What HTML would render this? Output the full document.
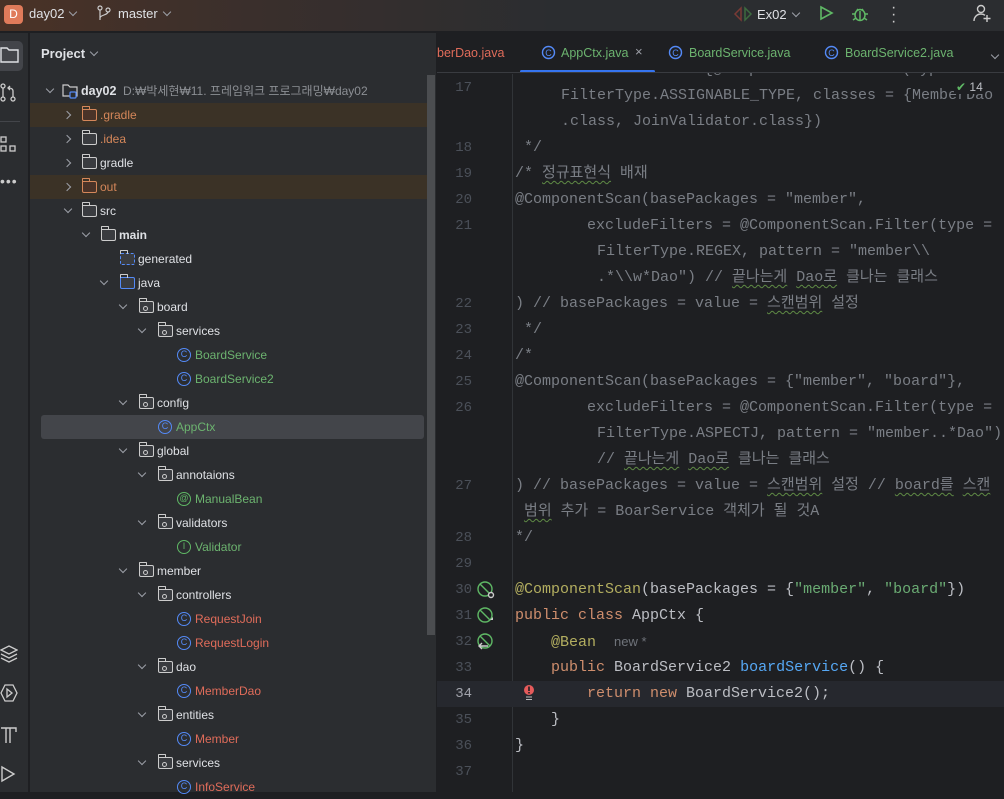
<!DOCTYPE html>
<html><head><meta charset="utf-8"><style>
*{margin:0;padding:0;box-sizing:border-box}
body{width:1004px;height:792px;overflow:hidden;background:#1e1f22;font-family:"Liberation Sans","Noto Sans CJK KR",sans-serif;position:relative;color:#dfe1e5}
.abs{position:absolute}
#title{left:0;top:0;width:1004px;height:32px;background:linear-gradient(90deg,#4a3226 0%,#3a2f2c 25%,#2b2d30 55%,#2b2d30 100%);border-bottom:1px solid #1e1f22}
#side{left:0;top:33px;width:29px;height:759px;background:#2b2d30;border-right:1px solid #1e1f22}
#tree{left:30px;top:33px;width:407px;height:759px;background:#2b2d30;border-right:1px solid #1e1f22}
.row{position:absolute;left:0;height:24px;font-size:12px;line-height:24px;white-space:nowrap}
.arr{position:absolute;top:7px;width:6px;height:6px;border-right:1.3px solid #9da0a8;border-bottom:1.3px solid #9da0a8}
.dn{transform:rotate(45deg)}
.rt{transform:rotate(-45deg);top:9px}
.ic{position:absolute;top:5px}
.code{position:absolute;left:515px;font-family:"Liberation Mono","Noto Sans CJK KR",monospace;font-size:15px;line-height:26px;height:26px;white-space:pre;color:#bcbec4}
.ln{position:absolute;left:440px;width:32px;text-align:right;font-family:"Liberation Mono",monospace;font-size:14px;line-height:26px;color:#4b5059}
.k{color:#cf8e6d}.a{color:#b3ae60}.s{color:#6aab73}.c{color:#7a7e85}.m{color:#56a8f5}
.w{text-decoration:underline wavy #5f8a45;text-underline-offset:3px;text-decoration-thickness:1px}
.tab{position:absolute;top:46px;font-size:12.5px;white-space:nowrap}
.chev{display:inline-block;width:6px;height:6px;border-right:1.3px solid #9da0a8;border-bottom:1.3px solid #9da0a8;transform:rotate(45deg);margin-left:6px;position:relative;top:-3px}
.f{position:absolute;top:6px;width:15px;height:12px;border:1.2px solid #ccc;border-radius:1px 2px 2px 2px;background:#3a3c40}
.f::before{content:"";position:absolute;left:-1.2px;top:-4px;width:6px;height:3px;border:1.2px solid #ccc;border-bottom:none;border-radius:1px 1px 0 0}
.fo{border-color:#d5875a;background:#4a3328}.fo::before{border-color:#d5875a}
.p::after{content:"";position:absolute;left:3px;top:4px;width:3px;height:3px;border:1px solid #ccc;border-radius:50%}
.cl{position:absolute;top:5px;width:14px;height:14px;border:1.4px solid #548af7;border-radius:50%;font-size:9px;line-height:11px;text-align:center;color:#548af7}
.cg{border-color:#5fb865;color:#5fb865}
</style></head><body>
<div id="title" class="abs">
 <div class="abs" style="left:4px;top:5px;width:19px;height:19px;background:#e07b5a;border-radius:4px;color:#fff;font-size:12px;text-align:center;line-height:19px">D</div>
 <div class="abs" style="left:29px;top:6px;font-size:13px;color:#dfe1e5">day02<span class="chev"></span></div>
 <svg class="abs" style="left:97px;top:5px" width="14" height="16" viewBox="0 0 14 16" fill="none" stroke="#ccc" stroke-width="1.2"><circle cx="3" cy="3" r="2"/><circle cx="11" cy="5" r="2"/><path d="M3 5v10M11 7c0 3-8 3-8 6"/></svg>
 <div class="abs" style="left:118px;top:6px;font-size:13px;color:#dfe1e5">master<span class="chev"></span></div>
 <svg class="abs" style="left:733px;top:6px" width="20" height="16" viewBox="0 0 20 16"><path d="M8 2L2 8l6 6z" fill="none" stroke="#7a3a35" stroke-width="1.5"/><path d="M12 2l6 6-6 6z" fill="none" stroke="#3d6b3f" stroke-width="1.5"/></svg>
 <div class="abs" style="left:757px;top:7px;font-size:13px;color:#dfe1e5">Ex02<span class="chev"></span></div>
 <svg class="abs" style="left:818px;top:5px" width="16" height="16" viewBox="0 0 16 16"><path d="M3 2l11 6-11 6z" fill="none" stroke="#5fb865" stroke-width="1.6"/></svg>
 <svg class="abs" style="left:851px;top:5px" width="18" height="17" viewBox="0 0 18 17" fill="none" stroke="#5fb865" stroke-width="1.5"><ellipse cx="9" cy="10" rx="5" ry="5.5"/><path d="M6 4l1.5 1.5M12 4l-1.5 1.5M1 9h3M14 9h3M2 15l3-2M16 15l-3-2M9 6v9"/></svg>
 <div class="abs" style="left:891px;top:4px;width:4px;color:#ccc;font-size:16px;line-height:7px">·<br>·<br>·</div>
 <svg class="abs" style="left:972px;top:3px" width="20" height="20" viewBox="0 0 20 20" fill="none" stroke="#ccc" stroke-width="1.4"><circle cx="9" cy="6" r="3.5"/><path d="M2 18c0-4 3-7 7-7 2 0 3 .5 4 1.3M15 12v7M11.5 15.5h7"/></svg>
</div>
<div id="side" class="abs">
 <div class="abs" style="left:0;top:8px;width:23px;height:30px;background:#43454a;border-radius:0 5px 5px 0"></div>
 <svg class="abs" style="left:0;top:13px" width="20" height="18" viewBox="0 0 20 18" fill="none" stroke="#dfe1e5" stroke-width="1.4"><path d="M1 2h6l2 2h9v12H1z"/></svg>
 <svg class="abs" style="left:0;top:50px" width="18" height="20" viewBox="0 0 18 20" fill="none" stroke="#ccc" stroke-width="1.3"><circle cx="3" cy="3" r="2"/><circle cx="3" cy="16" r="2"/><circle cx="13" cy="16" r="2"/><path d="M3 5v9M13 14V8c0-2-2-3-4-3M10 3l-2 2 2 2"/></svg>
 <div class="abs" style="left:0;top:88px;width:20px;border-top:1px solid #43454a"></div>
 <svg class="abs" style="left:0;top:103px" width="18" height="18" viewBox="0 0 18 18" fill="none" stroke="#ccc" stroke-width="1.3"><rect x="1" y="1" width="5" height="5"/><rect x="1" y="10" width="5" height="5"/><rect x="10" y="10" width="5" height="5"/></svg>
 <div class="abs" style="left:0;top:140px;color:#ccc;font-size:14px;letter-spacing:1px">•••</div>
 <svg class="abs" style="left:0;top:612px" width="18" height="18" viewBox="0 0 18 18" fill="none" stroke="#ccc" stroke-width="1.3"><path d="M9 1l8 4-8 4-8-4zM1 9l8 4 8-4M1 13l8 4 8-4"/></svg>
 <svg class="abs" style="left:0;top:651px" width="18" height="18" viewBox="0 0 18 18" fill="none" stroke="#ccc" stroke-width="1.3"><path d="M5 1h8l4 8-4 8H5L1 9z"/><path d="M7 5l5 4-5 4z"/></svg>
 <svg class="abs" style="left:0;top:692px" width="18" height="20" viewBox="0 0 18 20" fill="none" stroke="#ccc" stroke-width="1.4"><path d="M1 3h15v4M6 3v15M10 3v15"/></svg>
 <svg class="abs" style="left:0;top:732px" width="16" height="18" viewBox="0 0 16 18" fill="none" stroke="#ccc" stroke-width="1.4"><path d="M2 2l12 7-12 7z"/></svg>
</div>
<div id="tree" class="abs">
 <div class="abs" style="left:11px;top:13px;font-size:13px;font-weight:bold;color:#dfe1e5">Project<span class="chev"></span></div>
 <div class="abs" style="left:397px;top:42px;width:8px;height:560px;background:#4b4d50"></div>
</div>
<div class="abs" style="left:30px;top:33px;width:397px;height:759px;overflow:hidden">
 <div class="abs" style="left:0;top:70px;width:397px;height:24px;background:#3b3226"></div>
 <div class="abs" style="left:0;top:142px;width:397px;height:24px;background:#3b3226"></div>
 <div class="abs" style="left:11px;top:382px;width:383px;height:24px;background:#43454a;border-radius:3px"></div>
</div>

<div class="abs" style="left:512px;top:74px;width:1px;height:718px;background:#313438"></div>
<div class="abs" style="left:437px;top:681px;width:567px;height:26px;background:#26282e"></div>

<div class="ln" style="top:75px">17</div>
<div class="ln" style="top:135px">18</div>
<div class="ln" style="top:161px">19</div>
<div class="ln" style="top:187px">20</div>
<div class="ln" style="top:213px">21</div>
<div class="ln" style="top:291px">22</div>
<div class="ln" style="top:317px">23</div>
<div class="ln" style="top:343px">24</div>
<div class="ln" style="top:369px">25</div>
<div class="ln" style="top:395px">26</div>
<div class="ln" style="top:473px">27</div>
<div class="ln" style="top:525px">28</div>
<div class="ln" style="top:551px">29</div>
<div class="ln" style="top:577px">30</div>
<div class="ln" style="top:603px">31</div>
<div class="ln" style="top:629px">32</div>
<div class="ln" style="top:655px">33</div>
<div class="ln" style="top:681px;color:#a1a3ab">34</div>
<div class="ln" style="top:707px">35</div>
<div class="ln" style="top:733px">36</div>
<div class="ln" style="top:759px">37</div>

<svg class="abs" style="left:476px;top:580px" width="20" height="80" viewBox="0 0 20 80" fill="none" stroke="#5fb865" stroke-width="1.4"><circle cx="9" cy="9" r="7"/><path d="M4 4l10 10"/><circle cx="15" cy="15" r="2.5" stroke="#ccc" fill="#1e1f22"/><circle cx="9" cy="35" r="7"/><path d="M4 30l10 10"/><path d="M14 40h3v-3z" fill="#ccc" stroke="none"/><circle cx="9" cy="61" r="7"/><path d="M4 56l10 10"/><path d="M12 66H4M6 63l-3 3 3 3" stroke="#ccc"/></svg>
<svg class="abs" style="left:523px;top:684px" width="12" height="18" viewBox="0 0 12 18"><circle cx="6" cy="6" r="5" fill="#e55b5b"/><rect x="5.2" y="2.5" width="1.6" height="4.5" fill="#1e1f22"/><rect x="5.2" y="8" width="1.6" height="1.5" fill="#1e1f22"/><path d="M3 13h6M3 15.5h6" stroke="#bbb" stroke-width="1"/></svg>

<div class="code" style="top:57px;left:551px"><span class="c">excludeFilters = {@ComponentScan.Filter(type</span></div>
<div class="code" style="top:83px;left:561px"><span class="c">FilterType.ASSIGNABLE_TYPE, classes = {MemberDao</span></div>
<div class="code" style="top:109px;left:561px"><span class="c">.class, JoinValidator.class})</span></div>
<div class="code" style="top:135px"><span class="c"> */</span></div>
<div class="code" style="top:161px"><span class="c">/* <span class="w">정규표현식</span> 배재</span></div>
<div class="code" style="top:187px"><span class="c">@ComponentScan(basePackages = "member",</span></div>
<div class="code" style="top:213px"><span class="c">        excludeFilters = @ComponentScan.Filter(type =</span></div>
<div class="code" style="top:239px;left:597px"><span class="c">FilterType.REGEX, pattern = "member\\</span></div>
<div class="code" style="top:265px;left:597px"><span class="c">.*\\w*Dao") // <span class="w">끝나는게</span> <span class="w">Dao로</span> 클나는 클래스</span></div>
<div class="code" style="top:291px"><span class="c">) // basePackages = value = <span class="w">스캔범위</span> 설정</span></div>
<div class="code" style="top:317px"><span class="c"> */</span></div>
<div class="code" style="top:343px"><span class="c">/*</span></div>
<div class="code" style="top:369px"><span class="c">@ComponentScan(basePackages = {"member", "board"},</span></div>
<div class="code" style="top:395px"><span class="c">        excludeFilters = @ComponentScan.Filter(type =</span></div>
<div class="code" style="top:421px;left:597px"><span class="c">FilterType.ASPECTJ, pattern = "member..*Dao")</span></div>
<div class="code" style="top:447px;left:597px"><span class="c">// <span class="w">끝나는게</span> <span class="w">Dao로</span> 클나는 클래스</span></div>
<div class="code" style="top:473px"><span class="c">) // basePackages = value = <span class="w">스캔범위</span> 설정 // <span class="w">board를</span> <span class="w">스캔</span></span></div>
<div class="code" style="top:499px"><span class="c"> <span class="w">범위</span> 추가 = BoarService 객체가 될 것A</span></div>
<div class="code" style="top:525px"><span class="c">*/</span></div>
<div class="code" style="top:577px"><span class="a">@ComponentScan</span>(basePackages = {<span class="s">"member"</span>, <span class="s">"board"</span>})</div>
<div class="code" style="top:603px"><span class="k">public class</span> AppCtx {</div>
<div class="code" style="top:629px">    <span class="a">@Bean</span>  <span style="font-family:'Liberation Sans';font-size:13px;color:#6f737a">new *</span></div>
<div class="code" style="top:655px">    <span class="k">public</span> BoardService2 <span class="m">boardService</span>() {</div>
<div class="code" style="top:681px">        <span class="k">return new</span> BoardService2();</div>
<div class="code" style="top:707px">    }</div>
<div class="code" style="top:733px">}</div>
<div class="abs" style="left:954px;top:80px;font-size:12px;color:#bcbec4;background:#1e1f22;padding-left:2px"><span style="color:#5fb865">✔</span> 14</div>

<div class="abs" style="left:437px;top:33px;width:567px;height:40px;background:#1e1f22"></div>
<div class="tab" style="left:437px;color:#e06c5a">berDao.java</div>
<svg class="abs" style="left:541px;top:45px" width="15" height="15"><circle cx="7.5" cy="7.5" r="6" fill="none" stroke="#548af7" stroke-width="1.4"/><text x="7.5" y="11" font-size="9" fill="#548af7" text-anchor="middle" font-family="Liberation Sans">C</text></svg>
<div class="tab" style="left:561px;color:#6cb36f">AppCtx.java</div>
<div class="tab" style="left:635px;color:#9da0a8;top:44px;font-size:13px">×</div>
<div class="abs" style="left:520px;top:70px;width:135px;height:3px;background:#3574f0;border-radius:2px"></div>
<svg class="abs" style="left:668px;top:45px" width="15" height="15"><circle cx="7.5" cy="7.5" r="6" fill="none" stroke="#548af7" stroke-width="1.4"/><text x="7.5" y="11" font-size="9" fill="#548af7" text-anchor="middle" font-family="Liberation Sans">C</text></svg>
<div class="tab" style="left:689px;color:#6cb36f">BoardService.java</div>
<svg class="abs" style="left:824px;top:45px" width="15" height="15"><circle cx="7.5" cy="7.5" r="6" fill="none" stroke="#548af7" stroke-width="1.4"/><text x="7.5" y="11" font-size="9" fill="#548af7" text-anchor="middle" font-family="Liberation Sans">C</text></svg>
<div class="tab" style="left:845px;color:#6cb36f">BoardService2.java</div>
<div class="abs" style="left:986px;top:48px"><span class="chev"></span></div>
<div class="abs" style="left:437px;top:72px;width:567px;height:1px;background:#393b40"></div>

<div class="row" style="top:79px;left:0"><span class="arr dn" style="left:47px"></span>
 <svg class="ic" style="left:62px;top:4px" width="16" height="16" viewBox="0 0 16 16" fill="none"><path d="M1 2h5l2 2h7v9H1z" stroke="#ccc" stroke-width="1.2"/><rect x="8" y="9" width="6" height="6" rx="1" fill="#2b2d30" stroke="#548af7" stroke-width="1.2"/></svg>
 <span style="position:absolute;left:81px;font-weight:bold;color:#dfe1e5;font-size:12.5px">day02</span><span style="position:absolute;left:123px;color:#8c8f94;font-size:12px">D:₩박세현₩11. 프레임워크 프로그래밍₩day02</span></div>
<div class="row" style="top:103px"><span class="arr rt" style="left:64px"></span><span class="f fo" style="left:82px"></span><span style="position:absolute;left:100px;color:#d5875a">.gradle</span></div>
<div class="row" style="top:127px"><span class="arr rt" style="left:64px"></span><span class="f" style="left:82px"></span><span style="position:absolute;left:100px;color:#d5875a">.idea</span></div>
<div class="row" style="top:151px"><span class="arr rt" style="left:64px"></span><span class="f" style="left:82px"></span><span style="position:absolute;left:100px">gradle</span></div>
<div class="row" style="top:175px"><span class="arr rt" style="left:64px"></span><span class="f fo" style="left:82px"></span><span style="position:absolute;left:100px;color:#d5875a">out</span></div>
<div class="row" style="top:199px"><span class="arr dn" style="left:65px"></span><span class="f" style="left:82px"></span><span style="position:absolute;left:100px">src</span></div>
<div class="row" style="top:223px"><span class="arr dn" style="left:83px"></span><span class="f" style="left:101px"></span><span style="position:absolute;left:119px;font-weight:bold">main</span></div>
<div class="row" style="top:247px"><span class="f" style="left:120px;border-color:#548af7;border-style:dashed"></span><span style="position:absolute;left:138px">generated</span></div>
<div class="row" style="top:271px"><span class="arr dn" style="left:101px"></span><span class="f" style="left:120px;border-color:#548af7"></span><span style="position:absolute;left:138px">java</span></div>
<div class="row" style="top:295px"><span class="arr dn" style="left:120px"></span><span class="f p" style="left:139px"></span><span style="position:absolute;left:157px">board</span></div>
<div class="row" style="top:319px"><span class="arr dn" style="left:139px"></span><span class="f p" style="left:158px"></span><span style="position:absolute;left:176px">services</span></div>
<div class="row" style="top:343px"><span class="cl" style="left:177px">C</span><span style="position:absolute;left:195px;color:#6cb36f">BoardService</span></div>
<div class="row" style="top:367px"><span class="cl" style="left:177px">C</span><span style="position:absolute;left:195px;color:#6cb36f">BoardService2</span></div>
<div class="row" style="top:391px"><span class="arr dn" style="left:120px"></span><span class="f p" style="left:139px"></span><span style="position:absolute;left:157px">config</span></div>
<div class="row" style="top:415px"><span class="cl" style="left:158px">C</span><span style="position:absolute;left:176px;color:#6cb36f">AppCtx</span></div>
<div class="row" style="top:439px"><span class="arr dn" style="left:120px"></span><span class="f p" style="left:139px"></span><span style="position:absolute;left:157px">global</span></div>
<div class="row" style="top:463px"><span class="arr dn" style="left:139px"></span><span class="f p" style="left:158px"></span><span style="position:absolute;left:176px">annotaions</span></div>
<div class="row" style="top:487px"><span class="cl cg" style="left:177px">@</span><span style="position:absolute;left:195px;color:#6cb36f">ManualBean</span></div>
<div class="row" style="top:511px"><span class="arr dn" style="left:139px"></span><span class="f p" style="left:158px"></span><span style="position:absolute;left:176px">validators</span></div>
<div class="row" style="top:535px"><span class="cl cg" style="left:177px">I</span><span style="position:absolute;left:195px;color:#6cb36f">Validator</span></div>
<div class="row" style="top:559px"><span class="arr dn" style="left:120px"></span><span class="f p" style="left:139px"></span><span style="position:absolute;left:157px">member</span></div>
<div class="row" style="top:583px"><span class="arr dn" style="left:139px"></span><span class="f p" style="left:158px"></span><span style="position:absolute;left:176px">controllers</span></div>
<div class="row" style="top:607px"><span class="cl" style="left:177px">C</span><span style="position:absolute;left:195px;color:#e06c5a">RequestJoin</span></div>
<div class="row" style="top:631px"><span class="cl" style="left:177px">C</span><span style="position:absolute;left:195px;color:#e06c5a">RequestLogin</span></div>
<div class="row" style="top:655px"><span class="arr dn" style="left:139px"></span><span class="f p" style="left:158px"></span><span style="position:absolute;left:176px">dao</span></div>
<div class="row" style="top:679px"><span class="cl" style="left:177px">C</span><span style="position:absolute;left:195px;color:#e06c5a">MemberDao</span></div>
<div class="row" style="top:703px"><span class="arr dn" style="left:139px"></span><span class="f p" style="left:158px"></span><span style="position:absolute;left:176px">entities</span></div>
<div class="row" style="top:727px"><span class="cl" style="left:177px">C</span><span style="position:absolute;left:195px;color:#e06c5a">Member</span></div>
<div class="row" style="top:751px"><span class="arr dn" style="left:139px"></span><span class="f p" style="left:158px"></span><span style="position:absolute;left:176px">services</span></div>
<div class="row" style="top:775px"><span class="cl" style="left:177px">C</span><span style="position:absolute;left:195px;color:#e06c5a">InfoService</span></div>
</body></html>
